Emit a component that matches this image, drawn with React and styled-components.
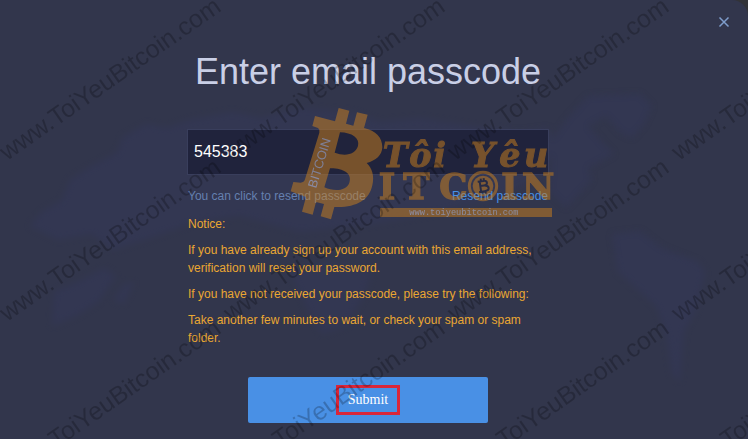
import React, { useState } from 'react';
import styled, { createGlobalStyle } from 'styled-components';

const GlobalStyle = createGlobalStyle`
  * {
    box-sizing: border-box;
  }

  body {
    margin: 0;
    background: #323338;
    font-family: 'Liberation Sans', Arial, sans-serif;
  }
`;

const Dialog = styled.main`
  position: relative;
  min-height: 100vh;
  padding: 48px 12px 16px 0;
  overflow: hidden;
  background: #32364c;
  border-top-right-radius: 16px;
`;

const Backdrop = styled.svg`
  position: absolute;
  inset: 0;
  width: 100%;
  height: 100%;
  fill: #343859;
  filter: blur(3px);
  opacity: 0.5;
`;

const WatermarkLayer = styled.svg`
  position: absolute;
  inset: 0;
  width: 100%;
  height: 100%;
  pointer-events: none;
  fill: #000;
  opacity: 0.22;
  font-size: 25px;
`;

const CloseButton = styled.button`
  position: absolute;
  top: 14px;
  right: 16px;
  display: flex;
  padding: 2px;
  border: 0;
  background: none;
  color: #7f9dcb;
  cursor: pointer;
`;

const Form = styled.form`
  position: relative;
  display: flex;
  flex-direction: column;
  align-items: center;
`;

const Title = styled.h1`
  margin: 0 0 33px;
  color: #c9cfe6;
  font-size: 36px;
  font-weight: 400;
  line-height: 48px;
`;

const Fields = styled.div`
  position: relative;
  width: 100%;
  max-width: 362px;
`;

const PasscodeInput = styled.input`
  display: block;
  width: 100%;
  height: 46px;
  padding: 0 6px;
  border: 1px solid #393e5c;
  background: #20233c;
  color: #fff;
  font-family: inherit;
  font-size: 16px;
  outline: 0;
`;

const HintRow = styled.div`
  display: flex;
  justify-content: space-between;
  padding: 12px 1px 10px;
  color: #6580b0;
  font-size: 12px;
  line-height: 18px;
`;

const ResendLink = styled.a`
  color: #4790e6;
  text-decoration: none;
`;

const Notice = styled.div`
  display: flex;
  flex-direction: column;
  gap: 8px;
  padding: 0 1px;
  color: #eaa732;
  font-size: 12px;
  line-height: 18px;

  p {
    margin: 0;
  }
`;

const LogoMark = styled.svg`
  position: absolute;
  top: -29px;
  left: 93px;
  width: 280px;
  height: 125px;
  pointer-events: none;
  fill: #cd811d;
  opacity: 0.5;
  font-family: 'DejaVu Serif', serif;
  font-weight: 700;
`;

const SubmitButton = styled.button`
  display: flex;
  align-items: center;
  justify-content: center;
  width: 240px;
  height: 46px;
  margin-top: 30px;
  border: 0;
  border-radius: 2px;
  background: #4990e5;
  color: #fff;
  font-family: 'Liberation Serif', 'Times New Roman', serif;
  font-size: 14px;
  cursor: pointer;
`;

const Highlight = styled.span`
  padding: 0 9px;
  border: 3px solid #d9263a;
  line-height: 24px;
`;

const WorldMap = () => (
  <Backdrop viewBox="0 0 748 439" preserveAspectRatio="xMidYMin slice" aria-hidden="true">
    <path d="M30 226 L42 212 L62 200 L70 180 L92 166 L118 152 L122 138 L146 124 L166 128 L190 120 L232 112 L262 118 L300 108 L352 112 L380 122 L420 118 L470 126 L520 132 L548 128 L556 146 L540 176 L500 196 L440 212 L372 224 L300 232 L240 216 L196 222 L150 238 L112 250 L92 234 L58 240 Z" />
    <path d="M52 326 L54 292 L78 282 L104 268 L116 276 L98 302 L76 316 Z" />
    <path d="M114 300 L124 284 L134 282 L124 304 Z" />
    <path d="M288 268 L330 262 L372 272 L364 296 L346 326 L322 334 L308 310 Z" />
    <path d="M552 140 L566 120 L588 96 L640 94 L652 106 L644 124 L632 138 L620 132 L606 116 L588 126 L602 142 L614 154 L588 168 L592 180 L566 208 L550 192 Z" />
    <path d="M612 234 L640 231 L662 248 L698 262 L705 272 L696 310 L684 332 L680 382 L672 374 L666 332 L656 306 L618 272 Z" />
  </Backdrop>
);

const COLUMNS = [...Array(10).keys()];
const ROWS = [...Array(9).keys()];

const Watermark = () => (
  <WatermarkLayer aria-hidden="true">
    {ROWS.map((row) =>
      COLUMNS.map((col) => (
        <text
          key={`${row}-${col}`}
          transform={`translate(${7 + col * 224} ${161 + row * 161}) rotate(-35)`}
        >
          www.ToiYeuBitcoin.com
        </text>
      ))
    )}
  </WatermarkLayer>
);

const SiteLogo = () => (
  <LogoMark viewBox="0 0 840 375" aria-hidden="true">
    <path
      fillRule="evenodd"
      d="M105 48 L165 64 L176 24 L208 32 L198 71 L220 77 L231 37 L263 44 L252 84 C288 92 307 112 307 142 C306 166 288 182 260 189 C276 204 284 228 277 256 C268 302 226 324 163 321 L153 358 L122 349 L132 312 L108 306 L98 344 L66 335 L78 291 L32 274 L40 246 L62 248 Q72 248 75 238 L118 98 Q120 88 114 84 L97 78 Z M180 97 L164 158 C196 170 226 164 234 138 C240 114 216 98 180 97 Z M150 205 L133 262 C164 276 200 272 208 248 C218 220 188 204 150 205 Z"
    />
    <text
      transform="translate(108 266) rotate(-73)"
      fill="#dcdcf2"
      fontFamily="Liberation Sans"
      fontWeight="400"
      fontSize="38"
    >
      BITCOIN
    </text>
    <g fontStyle="italic" fontSize="100" stroke="#cd811d" strokeWidth="3">
      <text x="308" y="202">T</text>
      <text x="388" y="202">ô</text>
      <text x="460" y="202">i</text>
      <text x="572" y="202">Y</text>
      <text x="658" y="202">ê</text>
      <text x="732" y="202">u</text>
    </g>
    <g fontSize="106" stroke="#cd811d" strokeWidth="4">
      <text x="296" y="297">I</text>
      <text x="370" y="297">T</text>
      <text x="478" y="297">C</text>
      <text x="664" y="297">I</text>
      <text x="726" y="297">N</text>
    </g>
    <circle cx="609" cy="258" r="41" fill="none" stroke="#cd811d" strokeWidth="9" />
    <circle cx="609" cy="258" r="31" />
    <g transform="rotate(-8 609 258)" fill="none" stroke="#1c2038" strokeWidth="6">
      <path d="M595 243 H612 Q622 243 622 250 Q622 257 612 257 H601 M612 257 Q625 258 625 266 Q625 274 612 274 H595 M601 243 V274 M605 235 V243 M614 235 V243 M605 274 V282 M614 274 V282" />
    </g>
    <path d="M300 324 H816 V351 H300 Z" />
    <text
      x="388"
      y="345"
      fill="#e4e0ee"
      fontFamily="Liberation Mono"
      fontWeight="400"
      fontSize="26"
    >
      www.toiyeubitcoin.com
    </text>
  </LogoMark>
);

const App = () => {
  const [passcode, setPasscode] = useState('545383');

  return (
    <>
      <GlobalStyle />
      <Dialog>
        <WorldMap />
        <Form onSubmit={(e) => e.preventDefault()}>
          <Title id="passcode-title">Enter email passcode</Title>
          <Fields>
            <PasscodeInput
              aria-labelledby="passcode-title"
              type="text"
              value={passcode}
              onChange={(e) => setPasscode(e.target.value)}
            />
            <HintRow>
              <span>You can click to resend passcode</span>
              <ResendLink href="#resend">Resend passcode</ResendLink>
            </HintRow>
            <Notice>
              <p>Notice:</p>
              <p>
                If you have already sign up your account with this email address, verification
                will reset your password.
              </p>
              <p>If you have not received your passcode, please try the following:</p>
              <p>Take another few minutes to wait, or check your spam or spam folder.</p>
            </Notice>
            <SiteLogo />
          </Fields>
          <SubmitButton type="submit">
            <Highlight>Submit</Highlight>
          </SubmitButton>
        </Form>
        <Watermark />
        <CloseButton type="button" aria-label="Close">
          <svg width="12" height="12" viewBox="0 0 12 12" stroke="currentColor" strokeWidth="1.5">
            <path d="M1.5 1.5 L10.5 10.5 M10.5 1.5 L1.5 10.5" />
          </svg>
        </CloseButton>
      </Dialog>
    </>
  );
};

export default App;
